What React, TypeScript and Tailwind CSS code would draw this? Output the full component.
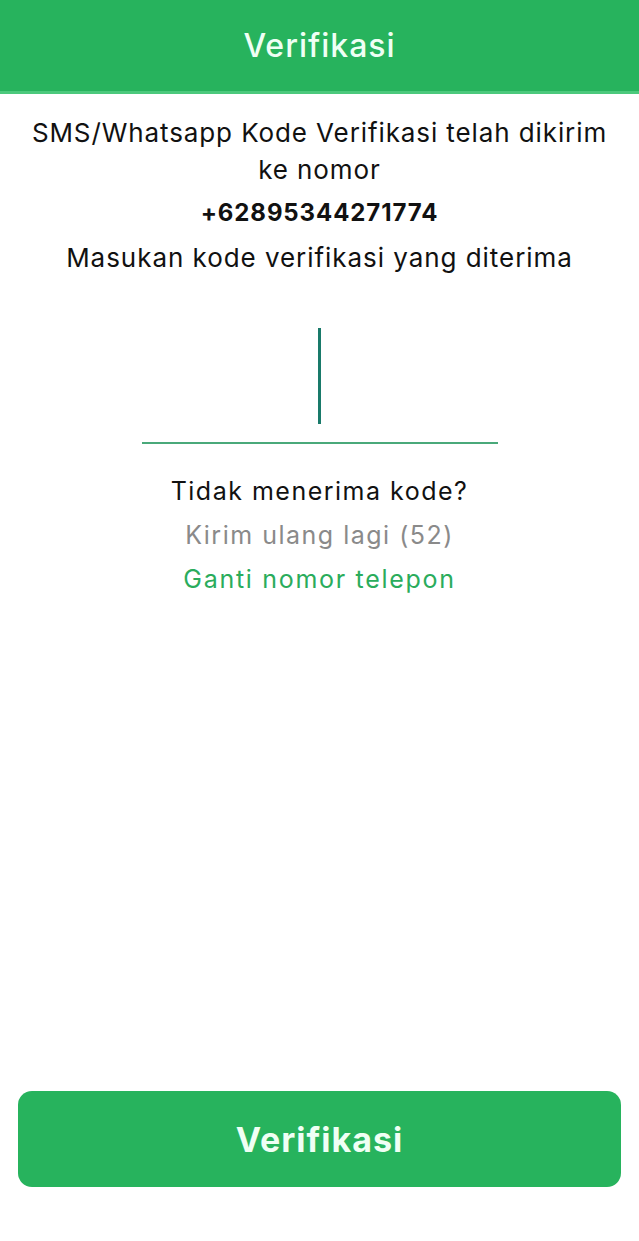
import React from "react";

export default function App() {
  const font = { fontFamily: "Inter, 'Noto Sans', sans-serif" };
  return (
    <div className="w-[639px] h-[1241px] bg-white flex flex-col" style={font}>
      <div className="h-[94px] bg-[#27b35d] border-b-[3px] border-[#4cc97c] flex items-center justify-center shrink-0">
        <span className="text-[32px] font-medium text-[#effff4] tracking-[1px]">Verifikasi</span>
      </div>
      <div className="flex flex-col items-center text-center text-[#111] pt-[20px]">
        <p className="text-[26px] leading-[37px] tracking-[0.9px]">
          SMS/Whatsapp Kode Verifikasi telah dikirim
          <br />
          ke nomor
        </p>
        <p className="text-[24px] leading-[45px] font-bold mt-[2px] tracking-[0.9px]">+62895344271774</p>
        <p className="text-[26px] leading-[45px] tracking-[0.95px]">Masukan kode verifikasi yang diterima</p>
        <div className="mt-[44px] w-[356px] h-[120px] flex items-start justify-center border-b-2 border-[#4aa97a]">
          <div className="w-[3px] h-[96px] bg-[#197a6a] mt-[4px]" />
        </div>
        <p className="text-[25px] leading-[44px] mt-[25px] tracking-[1.5px]">Tidak menerima kode?</p>
        <p className="text-[25px] leading-[44px] text-[#8a8a8a] tracking-[1.5px]">Kirim ulang lagi (52)</p>
        <p className="text-[25px] leading-[44px] text-[#2aac5c] tracking-[1.7px]">Ganti nomor telepon</p>
      </div>
      <div className="flex-1" />
      <div className="px-[18px] pb-[54px]">
        <button className="w-full h-[96px] rounded-[14px] bg-[#27b35d] flex items-center justify-center">
          <span className="text-[34px] font-bold text-[#effff4] tracking-[1px]">Verifikasi</span>
        </button>
      </div>
    </div>
  );
}
